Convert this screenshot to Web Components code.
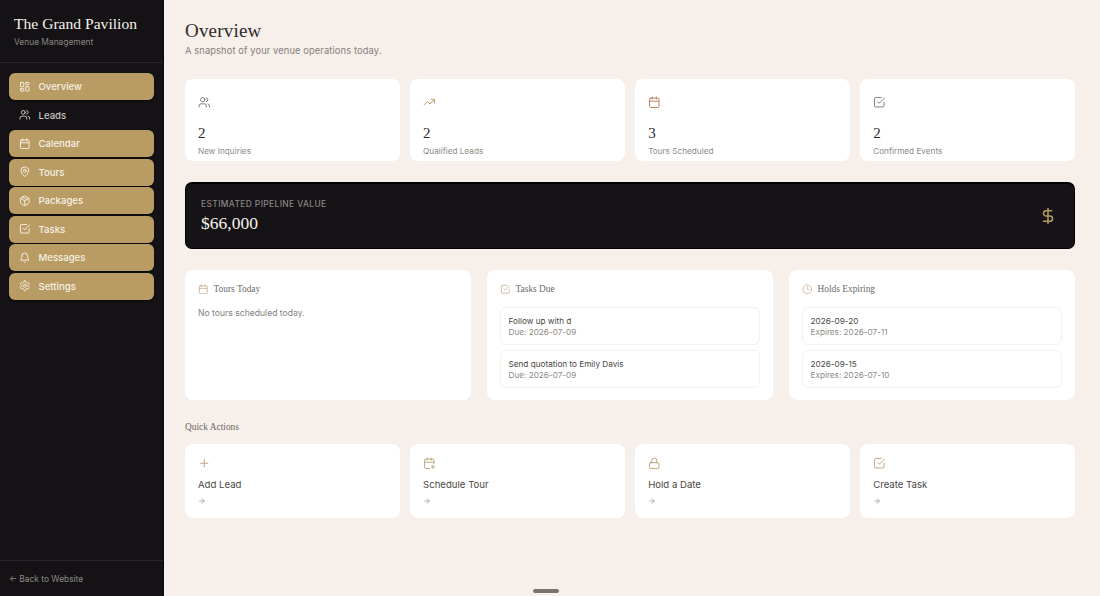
<!DOCTYPE html>
<html lang="en">
<head>
<meta charset="utf-8">
<title>The Grand Pavilion</title>
<style>
  html, body { margin: 0; height: 100%; overflow: hidden; background: #f6efea; }
  body { font-family: Inter, "Liberation Sans", sans-serif; }
</style>
</head>
<body>
<venue-app>
  <venue-sidebar slot="side">
    <venue-nav icon="dashboard" active>Overview</venue-nav>
    <venue-nav icon="users">Leads</venue-nav>
    <venue-nav icon="calendar" active>Calendar</venue-nav>
    <venue-nav icon="pin" active>Tours</venue-nav>
    <venue-nav icon="package" active>Packages</venue-nav>
    <venue-nav icon="check" active>Tasks</venue-nav>
    <venue-nav icon="bell" active>Messages</venue-nav>
    <venue-nav icon="settings" active>Settings</venue-nav>
  </venue-sidebar>

  <venue-heading title="Overview" sub="A snapshot of your venue operations today."></venue-heading>

  <venue-row columns="4" gap="10.3">
    <venue-stat icon="users" color="#6f6a66" value="2" label="New Inquiries"></venue-stat>
    <venue-stat icon="trending" color="#b0935a" value="2" label="Qualified Leads"></venue-stat>
    <venue-stat icon="calendar" color="#b5764f" value="3" label="Tours Scheduled"></venue-stat>
    <venue-stat icon="check" color="#6f6a66" value="2" label="Confirmed Events"></venue-stat>
  </venue-row>

  <venue-pipeline label="Estimated Pipeline Value" value="$66,000"></venue-pipeline>

  <venue-row columns="3" gap="16">
    <venue-panel icon="calendar" heading="Tours Today">
      <p class="empty" style="margin:0;font-size:8.6px;line-height:12px;color:#85807b">No tours scheduled today.</p>
    </venue-panel>
    <venue-panel icon="check" heading="Tasks Due">
      <venue-entry title="Follow up with d" detail="Due: 2026-07-09"></venue-entry>
      <venue-entry title="Send quotation to Emily Davis" detail="Due: 2026-07-09"></venue-entry>
    </venue-panel>
    <venue-panel icon="clock" heading="Holds Expiring">
      <venue-entry title="2026-09-20" detail="Expires: 2026-07-11"></venue-entry>
      <venue-entry title="2026-09-15" detail="Expires: 2026-07-10"></venue-entry>
    </venue-panel>
  </venue-row>

  <venue-section-title>Quick Actions</venue-section-title>

  <venue-row columns="4" gap="10.3">
    <venue-action icon="plus" label="Add Lead"></venue-action>
    <venue-action icon="calendar-plus" label="Schedule Tour"></venue-action>
    <venue-action icon="lock" label="Hold a Date"></venue-action>
    <venue-action icon="check" label="Create Task"></venue-action>
  </venue-row>
</venue-app>

<script>
// Lucide style icon shapes, 24x24 stroke paths
const ICONS = {
  dashboard: '<rect x="3" y="3" width="7" height="9" rx="1"/><rect x="14" y="3" width="7" height="5" rx="1"/><rect x="14" y="12" width="7" height="9" rx="1"/><rect x="3" y="16" width="7" height="5" rx="1"/>',
  users: '<path d="M16 21v-2a4 4 0 0 0-4-4H6a4 4 0 0 0-4 4v2"/><circle cx="9" cy="7" r="4"/><path d="M22 21v-2a4 4 0 0 0-3-3.87"/><path d="M16 3.13a4 4 0 0 1 0 7.75"/>',
  calendar: '<path d="M8 2v4"/><path d="M16 2v4"/><rect x="3" y="4" width="18" height="18" rx="2"/><path d="M3 10h18"/>',
  pin: '<path d="M20 10c0 6-8 12-8 12s-8-6-8-12a8 8 0 0 1 16 0Z"/><circle cx="12" cy="10" r="3"/>',
  package: '<path d="M11 21.73a2 2 0 0 0 2 0l7-4A2 2 0 0 0 21 16V8a2 2 0 0 0-1-1.73l-7-4a2 2 0 0 0-2 0l-7 4A2 2 0 0 0 3 8v8a2 2 0 0 0 1 1.73z"/><path d="M12 22V12"/><path d="m3.3 7 8.7 5 8.7-5"/><path d="m7.5 4.27 9 5.15"/>',
  check: '<path d="m9 11 3 3L22 4"/><path d="M21 12v7a2 2 0 0 1-2 2H5a2 2 0 0 1-2-2V5a2 2 0 0 1 2-2h11"/>',
  bell: '<path d="M6 8a6 6 0 0 1 12 0c0 7 3 9 3 9H3s3-2 3-9"/><path d="M10.3 21a1.94 1.94 0 0 0 3.4 0"/>',
  settings: '<path d="M12.22 2h-.44a2 2 0 0 0-2 2v.18a2 2 0 0 1-1 1.73l-.43.25a2 2 0 0 1-2 0l-.15-.08a2 2 0 0 0-2.73.73l-.22.38a2 2 0 0 0 .73 2.73l.15.1a2 2 0 0 1 1 1.72v.51a2 2 0 0 1-1 1.74l-.15.09a2 2 0 0 0-.73 2.73l.22.38a2 2 0 0 0 2.73.73l.15-.08a2 2 0 0 1 2 0l.43.25a2 2 0 0 1 1 1.73V20a2 2 0 0 0 2 2h.44a2 2 0 0 0 2-2v-.18a2 2 0 0 1 1-1.73l.43-.25a2 2 0 0 1 2 0l.15.08a2 2 0 0 0 2.73-.73l.22-.39a2 2 0 0 0-.73-2.73l-.15-.08a2 2 0 0 1-1-1.74v-.5a2 2 0 0 1 1-1.74l.15-.09a2 2 0 0 0 .73-2.73l-.22-.38a2 2 0 0 0-2.73-.73l-.15.08a2 2 0 0 1-2 0l-.43-.25a2 2 0 0 1-1-1.73V4a2 2 0 0 0-2-2z"/><circle cx="12" cy="12" r="3"/>',
  trending: '<polyline points="22 7 13.5 15.5 8.5 10.5 2 17"/><polyline points="16 7 22 7 22 13"/>',
  dollar: '<line x1="12" y1="2" x2="12" y2="22"/><path d="M17 5H9.5a3.5 3.5 0 0 0 0 7h5a3.5 3.5 0 0 1 0 7H6"/>',
  clock: '<circle cx="12" cy="12" r="10"/><polyline points="12 6 12 12 16 14"/>',
  plus: '<path d="M5 12h14"/><path d="M12 5v14"/>',
  'calendar-plus': '<path d="M8 2v4"/><path d="M16 2v4"/><path d="M21 13V6a2 2 0 0 0-2-2H5a2 2 0 0 0-2 2v14a2 2 0 0 0 2 2h8"/><path d="M3 10h18"/><path d="M16 19h6"/><path d="M19 16v6"/>',
  lock: '<rect x="3" y="11" width="18" height="11" rx="2"/><path d="M7 11V7a5 5 0 0 1 10 0v4"/>',
  arrow: '<path d="M5 12h14"/><path d="m12 5 7 7-7 7"/>'
};

const SERIF = '"Liberation Serif", "Times New Roman", serif';

class VenueIcon extends HTMLElement {
  connectedCallback() {
    const size = this.getAttribute("size") || 12;
    const stroke = this.getAttribute("stroke") || 2;
    const name = this.getAttribute("name");
    this.attachShadow({ mode: "open" }).innerHTML = `
      <style>:host { display: inline-flex; flex: none; width: ${size}px; height: ${size}px; } svg { display: block; }</style>
      <svg width="${size}" height="${size}" viewBox="0 0 24 24" fill="none" stroke="currentColor"
        stroke-width="${stroke}" stroke-linecap="round" stroke-linejoin="round">${ICONS[name] || ""}</svg>`;
  }
}
customElements.define("venue-icon", VenueIcon);

class VenueApp extends HTMLElement {
  connectedCallback() {
    this.attachShadow({ mode: "open" }).innerHTML = `
      <style>
        :host { display: flex; height: 596px; width: 1100px; position: relative; background: #f6efea; overflow: hidden; }
        main { flex: 1; min-width: 0; padding: 18px 25px 0 21px; display: flex; flex-direction: column; }
        .handle { position: absolute; left: 533px; top: 589px; width: 26px; height: 3.5px; border-radius: 2px; background: #7b726b; }
      </style>
      <slot name="side"></slot>
      <main><slot></slot></main>
      <div class="handle"></div>`;
  }
}
customElements.define("venue-app", VenueApp);

class VenueSidebar extends HTMLElement {
  connectedCallback() {
    this.attachShadow({ mode: "open" }).innerHTML = `
      <style>
        :host { display: flex; flex-direction: column; flex: none; box-sizing: border-box; width: 164px; height: 596px;
          background: #141215; border-right: 1px solid #0b0a0b; }
        header { height: 63px; box-sizing: border-box; padding: 14px 14px 0; border-bottom: 1px solid #262427; }
        h1 { margin: 0; font: 500 15.6px/20px ${SERIF}; color: #f6f1ea; white-space: nowrap; }
        small { display: block; margin-top: 3px; font-size: 8.4px; line-height: 11px; color: #88847f; }
        nav { flex: 1; display: flex; flex-direction: column; gap: 1.5px; padding: 10px 9px 0; }
        footer { height: 36px; box-sizing: border-box; border-top: 1px solid #262427; padding: 12px 9px 0; font-size: 8.4px; line-height: 12px; color: #8d8985; }
      </style>
      <header><h1>The Grand Pavilion</h1><small>Venue Management</small></header>
      <nav><slot></slot></nav>
      <footer>← Back to Website</footer>`;
  }
}
customElements.define("venue-sidebar", VenueSidebar);

class VenueNav extends HTMLElement {
  connectedCallback() {
    const icon = this.getAttribute("icon");
    this.attachShadow({ mode: "open" }).innerHTML = `
      <style>
        :host { display: flex; align-items: center; gap: 8px; box-sizing: border-box; height: 27px; padding: 0 10px;
          border-radius: 6px; font-size: 9.6px; font-weight: 500; color: #c9c5c1; }
        :host([active]) { background: #b89c64; color: #f7f0e4; box-shadow: 0 1px 2px rgba(0,0,0,.6); }
      </style>
      <venue-icon name="${icon}" size="11.5"></venue-icon><slot></slot>`;
  }
}
customElements.define("venue-nav", VenueNav);

class VenueHeading extends HTMLElement {
  connectedCallback() {
    this.attachShadow({ mode: "open" }).innerHTML = `
      <style>
        :host { display: block; height: 61px; }
        h2 { margin: 0; font: 400 19px/26px ${SERIF}; color: #2e2a2b; letter-spacing: .2px; }
        p { margin: 0; font-size: 9.3px; line-height: 14px; letter-spacing: .12px; color: #85807b; }
      </style>
      <h2>${this.getAttribute("title")}</h2>
      <p>${this.getAttribute("sub")}</p>`;
  }
}
customElements.define("venue-heading", VenueHeading);

class VenueRow extends HTMLElement {
  connectedCallback() {
    const n = this.getAttribute("columns");
    const gap = this.getAttribute("gap");
    this.attachShadow({ mode: "open" }).innerHTML = `
      <style>:host { display: grid; grid-template-columns: repeat(${n}, 1fr); gap: ${gap}px; }</style>
      <slot></slot>`;
  }
}
customElements.define("venue-row", VenueRow);

class VenueStat extends HTMLElement {
  connectedCallback() {
    this.attachShadow({ mode: "open" }).innerHTML = `
      <style>
        :host { display: block; box-sizing: border-box; height: 82px; padding: 13px 13px 0; background: #fff; border-radius: 8px; }
        venue-icon { color: ${this.getAttribute("color")}; }
        .value { margin-top: 12px; font: 400 15px/18px ${SERIF}; color: #2e2a2b; }
        .label { margin-top: 3px; font-size: 8.2px; line-height: 12px; color: #8f8a85; }
      </style>
      <venue-icon name="${this.getAttribute("icon")}" size="12.5" stroke="1.7"></venue-icon>
      <div class="value">${this.getAttribute("value")}</div>
      <div class="label">${this.getAttribute("label")}</div>`;
  }
}
customElements.define("venue-stat", VenueStat);

class VenuePipeline extends HTMLElement {
  connectedCallback() {
    this.attachShadow({ mode: "open" }).innerHTML = `
      <style>
        :host { display: flex; align-items: center; justify-content: space-between; box-sizing: border-box; height: 67px;
          margin: 21px 0; padding: 0 17px 0 15px; background: #151316; border-radius: 7px; border: 1px solid #000; border-top-width: 2px; }
        .label { font-size: 8.4px; line-height: 12px; font-weight: 500; letter-spacing: .4px; text-transform: uppercase; color: #8a8682; }
        .value { margin-top: 2px; font: 400 17.5px/22px ${SERIF}; color: #f8f3ec; }
        venue-icon { color: #b89c64; }
      </style>
      <div><div class="label">${this.getAttribute("label")}</div><div class="value">${this.getAttribute("value")}</div></div>
      <venue-icon name="dollar" size="18" stroke="2"></venue-icon>`;
  }
}
customElements.define("venue-pipeline", VenuePipeline);

class VenuePanel extends HTMLElement {
  connectedCallback() {
    this.attachShadow({ mode: "open" }).innerHTML = `
      <style>
        :host { display: block; box-sizing: border-box; height: 130px; padding: 13px 13px 0; background: #fff; border-radius: 8px; }
        h3 { display: flex; align-items: center; gap: 5px; margin: 0 0 12px; font: 400 9.4px/12px ${SERIF}; color: #6e6966; }
        venue-icon { color: #c2a98a; }
        .list { display: flex; flex-direction: column; gap: 5px; }
      </style>
      <h3><venue-icon name="${this.getAttribute("icon")}" size="10.5" stroke="1.7"></venue-icon>${this.getAttribute("heading")}</h3>
      <div class="list"><slot></slot></div>`;
  }
}
customElements.define("venue-panel", VenuePanel);

class VenueEntry extends HTMLElement {
  connectedCallback() {
    this.attachShadow({ mode: "open" }).innerHTML = `
      <style>
        :host { display: block; box-sizing: border-box; height: 38px; padding: 7.5px 7.5px 0; border: 1px solid #f3f0ee; border-radius: 6px; }
        .title { font-size: 8.2px; line-height: 11px; color: #4a4644; }
        .detail { font-size: 8.2px; line-height: 10px; color: #8f8a85; }
      </style>
      <div class="title">${this.getAttribute("title")}</div>
      <div class="detail">${this.getAttribute("detail")}</div>`;
  }
}
customElements.define("venue-entry", VenueEntry);

class VenueSectionTitle extends HTMLElement {
  connectedCallback() {
    this.attachShadow({ mode: "open" }).innerHTML = `
      <style>:host { display: block; height: 44px; box-sizing: border-box; padding-top: 21px; font: 400 9.4px/12px ${SERIF}; color: #6e6966; }</style>
      <slot></slot>`;
  }
}
customElements.define("venue-section-title", VenueSectionTitle);

class VenueAction extends HTMLElement {
  connectedCallback() {
    this.attachShadow({ mode: "open" }).innerHTML = `
      <style>
        :host { display: block; box-sizing: border-box; height: 74px; padding: 13px 13px 0; background: #fff; border-radius: 8px; }
        .main { color: #b89c74; display: block; height: 12.5px; }
        .label { margin-top: 8px; font-size: 9.6px; line-height: 14px; color: #4a4644; }
        .arrow { display: block; margin-top: 5px; color: #8f8a85; height: 8px; }
      </style>
      <venue-icon class="main" name="${this.getAttribute("icon")}" size="12.5" stroke="1.7"></venue-icon>
      <div class="label">${this.getAttribute("label")}</div>
      <venue-icon class="arrow" name="arrow" size="8" stroke="2"></venue-icon>`;
  }
}
customElements.define("venue-action", VenueAction);
</script>
</body>
</html>
